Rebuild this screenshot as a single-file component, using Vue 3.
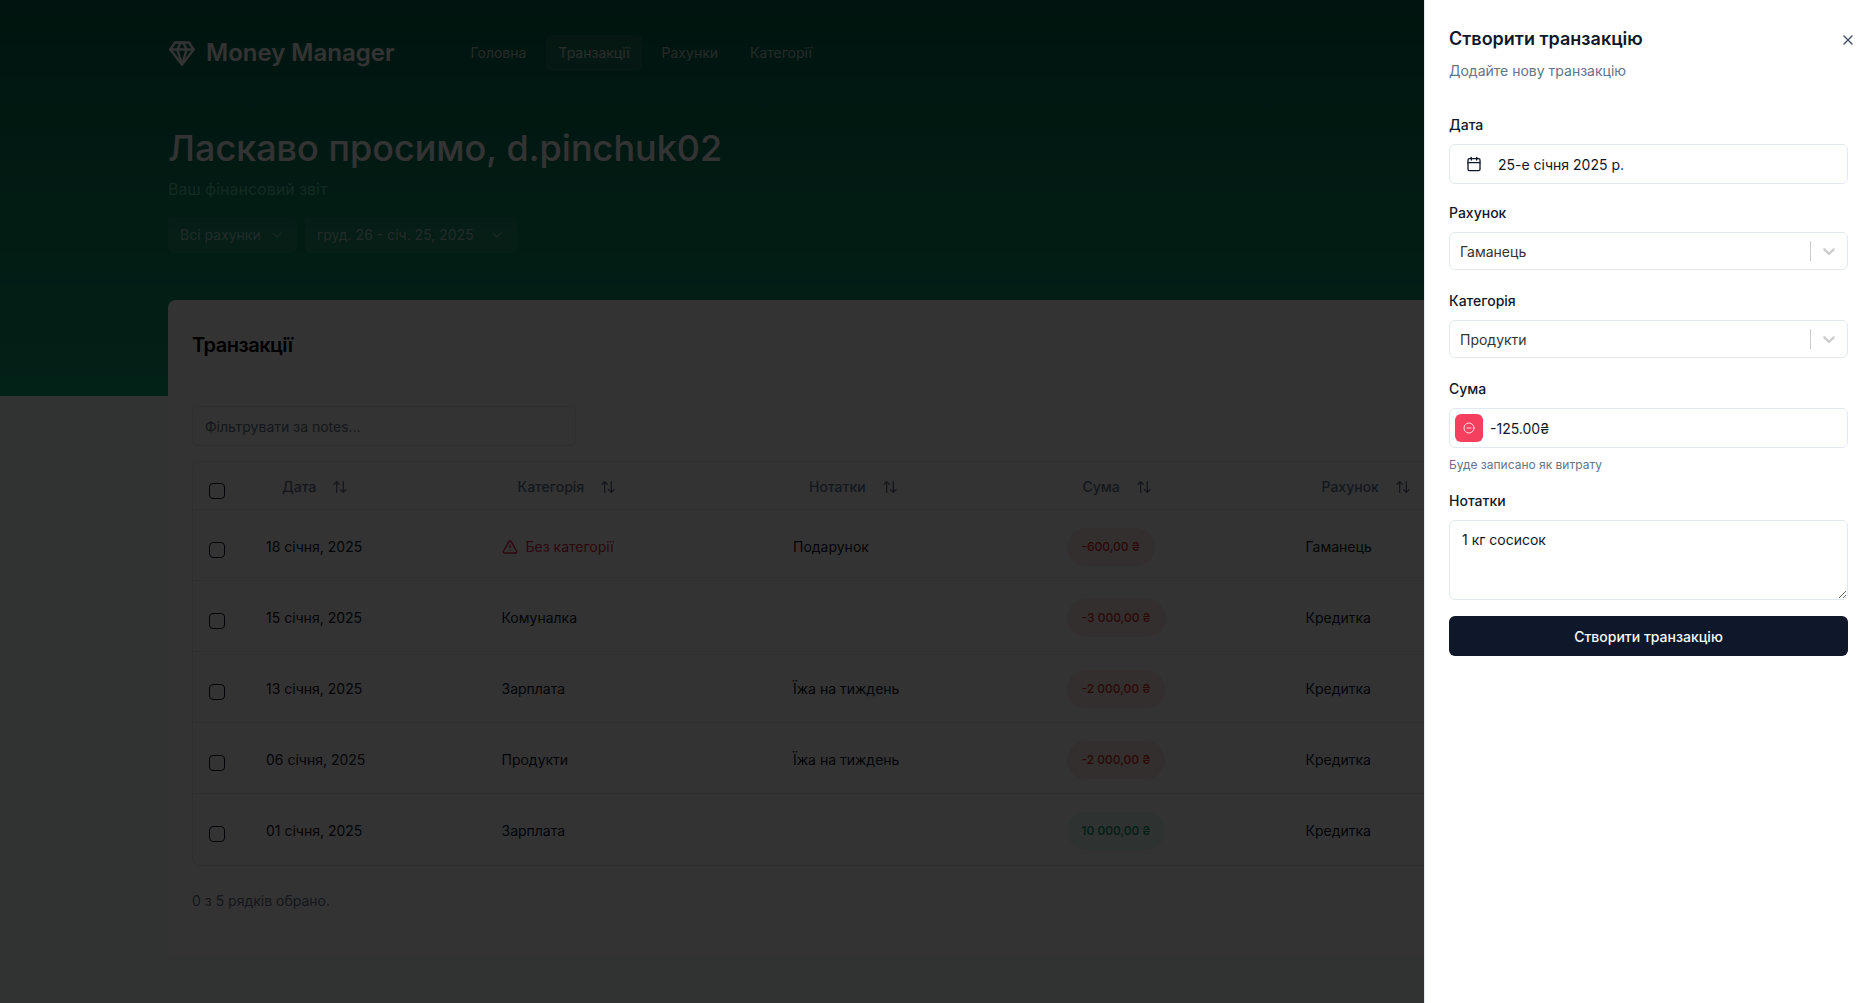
<template>
  <div class="page">
    <header class="hero">
      <div class="wrap">
        <nav class="topbar">
          <div class="brand">
            <svg class="gem" viewBox="0 0 24 24"><path d="M6 3h12l4 6-10 13L2 9Z" /><path d="M11 3 8 9l4 13 4-13-3-6" /><path d="M2 9h20" /></svg>
            <span>Money Manager</span>
          </div>
          <div class="links">
            <a v-for="link in links" :key="link" class="link" :class="{ active: link === 'Транзакції' }">{{ link }}</a>
          </div>
        </nav>
        <h1>Ласкаво просимо, d.pinchuk02</h1>
        <p class="sub">Ваш фінансовий звіт</p>
        <div class="filters">
          <button class="filter acc">
            <span>Всі рахунки</span>
            <svg class="ico chev" viewBox="0 0 24 24"><path d="m6 9 6 6 6-6" /></svg>
          </button>
          <button class="filter range">
            <span>груд. 26 - січ. 25, 2025</span>
            <svg class="ico chev" viewBox="0 0 24 24"><path d="m6 9 6 6 6-6" /></svg>
          </button>
        </div>
      </div>
    </header>

    <main class="wrap card">
      <h2>Транзакції</h2>
      <input class="search" type="text" placeholder="Фільтрувати за notes..." />
      <div class="table-box">
        <table>
          <colgroup>
            <col style="width: 57px" />
            <col style="width: 235.5px" />
            <col style="width: 291.5px" />
            <col style="width: 273.5px" />
            <col style="width: 239px" />
            <col />
          </colgroup>
          <thead>
            <tr>
              <th><span class="check"></span></th>
              <th v-for="col in columns" :key="col">
                <span class="sort">{{ col }}
                  <svg class="ico" viewBox="0 0 24 24"><path d="m21 16-4 4-4-4" /><path d="M17 20V4" /><path d="m3 8 4-4 4 4" /><path d="M7 4v16" /></svg>
                </span>
              </th>
              <th></th>
            </tr>
          </thead>
          <tbody>
            <tr v-for="row in rows" :key="row.date">
              <td><span class="check"></span></td>
              <td>{{ row.date }}</td>
              <td>
                <span v-if="!row.category" class="no-cat">
                  <svg class="ico" viewBox="0 0 24 24"><path d="m21.73 18-8-14a2 2 0 0 0-3.48 0l-8 14A2 2 0 0 0 4 21h16a2 2 0 0 0 1.73-3" /><path d="M12 9v4" /><path d="M12 17h.01" /></svg>
                  Без категорії
                </span>
                <template v-else>{{ row.category }}</template>
              </td>
              <td>{{ row.notes }}</td>
              <td><span class="pill" :class="row.income ? 'plus' : 'minus'">{{ row.amount }}</span></td>
              <td>{{ row.account }}</td>
              <td></td>
            </tr>
          </tbody>
        </table>
      </div>
      <p class="selected">0 з 5 рядків обрано.</p>
    </main>

    <div class="overlay"></div>

    <aside class="sheet">
      <svg class="ico close" viewBox="0 0 24 24"><path d="M18 6 6 18" /><path d="m6 6 12 12" /></svg>
      <h3>Створити транзакцію</h3>
      <p class="desc">Додайте нову транзакцію</p>

      <form class="form" @submit.prevent>
        <label>Дата</label>
        <button type="button" class="date">
          <svg class="ico" viewBox="0 0 24 24"><path d="M8 2v4" /><path d="M16 2v4" /><rect x="3" y="4" width="18" height="18" rx="2" /><path d="M3 10h18" /></svg>
          <span>25-е січня 2025 р.</span>
        </button>

        <label>Рахунок</label>
        <div class="select">
          <span>Гаманець</span>
          <i class="divider"></i>
          <svg class="select-arrow" viewBox="0 0 20 20"><path d="M4.516 7.548c0.436-0.446 1.043-0.481 1.576 0l3.908 3.747 3.908-3.747c0.533-0.481 1.141-0.446 1.574 0 0.436 0.445 0.408 1.197 0 1.615-0.406 0.418-4.695 4.502-4.695 4.502-0.217 0.223-0.502 0.335-0.787 0.335s-0.57-0.112-0.789-0.335c0 0-4.287-4.084-4.695-4.502s-0.436-1.17 0-1.615z" /></svg>
        </div>

        <label>Категорія</label>
        <div class="select">
          <span>Продукти</span>
          <i class="divider"></i>
          <svg class="select-arrow" viewBox="0 0 20 20"><path d="M4.516 7.548c0.436-0.446 1.043-0.481 1.576 0l3.908 3.747 3.908-3.747c0.533-0.481 1.141-0.446 1.574 0 0.436 0.445 0.408 1.197 0 1.615-0.406 0.418-4.695 4.502-4.695 4.502-0.217 0.223-0.502 0.335-0.787 0.335s-0.57-0.112-0.789-0.335c0 0-4.287-4.084-4.695-4.502s-0.436-1.17 0-1.615z" /></svg>
        </div>

        <label>Сума</label>
        <div class="amount">
          <span class="sign">
            <svg viewBox="0 0 24 24"><circle cx="12" cy="12" r="10" /><path d="M8 12h8" /></svg>
          </span>
          <span class="value">-125.00₴</span>
        </div>
        <p class="hint">Буде записано як витрату</p>

        <label>Нотатки</label>
        <textarea class="notes">1 кг сосисок</textarea>

        <button type="button" class="submit">Створити транзакцію</button>
      </form>
    </aside>
  </div>
</template>

<script setup>
const links = ['Головна', 'Транзакції', 'Рахунки', 'Категорії'];
const columns = ['Дата', 'Категорія', 'Нотатки', 'Сума', 'Рахунок'];

const rows = [
  { date: '18 січня, 2025', category: '', notes: 'Подарунок', amount: '-600,00 ₴', account: 'Гаманець' },
  { date: '15 січня, 2025', category: 'Комуналка', notes: '', amount: '-3 000,00 ₴', account: 'Кредитка' },
  { date: '13 січня, 2025', category: 'Зарплата', notes: 'Їжа на тиждень', amount: '-2 000,00 ₴', account: 'Кредитка' },
  { date: '06 січня, 2025', category: 'Продукти', notes: 'Їжа на тиждень', amount: '-2 000,00 ₴', account: 'Кредитка' },
  { date: '01 січня, 2025', category: 'Зарплата', notes: '', amount: '10 000,00 ₴', account: 'Кредитка', income: true },
];
</script>

<style>
html,
body {
  margin: 0;
  height: 100%;
  overflow: hidden;
  background: #f6faf8;
}
</style>

<style scoped>
.page {
  height: 1003px;
  font-family: Inter, "Liberation Sans", sans-serif;
  font-size: 14px;
  line-height: 20px;
  color: #0f172a;
  background: #f6faf8;
}

.wrap {
  width: 1536px;
  margin: 0 auto;
  box-sizing: border-box;
}

.hero {
  height: 396px;
  background: linear-gradient(to bottom, #07654b, #0da674);
  color: #fff;
}

.topbar {
  display: flex;
  align-items: center;
  padding-top: 35px;
}

.brand {
  display: flex;
  align-items: center;
  gap: 10px;
  font-size: 24px;
  font-weight: 600;
  line-height: 36px;
  width: 290.5px;
}

.gem {
  width: 28px;
  height: 28px;
  fill: none;
  stroke: currentColor;
  stroke-width: 2;
  stroke-linecap: round;
  stroke-linejoin: round;
}

.links {
  display: flex;
  gap: 8px;
}

.link {
  padding: 8px 12px;
  border-radius: 6px;
  color: rgba(255, 255, 255, 0.7);
}

.link.active {
  background: rgba(255, 255, 255, 0.08);
  color: rgba(255, 255, 255, 0.75);
}

h1 {
  margin: 57px 0 0;
  font-size: 36px;
  line-height: 40px;
  font-weight: 500;
}

.sub {
  margin: 9px 0 0;
  font-size: 16px;
  line-height: 24px;
  color: #5fcfa8;
}

.filters {
  display: flex;
  gap: 8px;
  margin-top: 16px;
}

.filter {
  display: flex;
  align-items: center;
  justify-content: space-between;
  height: 36px;
  padding: 0 12px;
  border: 0;
  border-radius: 6px;
  background: rgba(255, 255, 255, 0.08);
  color: rgba(255, 255, 255, 0.62);
  font: inherit;
}

.filter.acc {
  width: 129px;
}

.filter.range {
  width: 212px;
}

.ico {
  width: 16px;
  height: 16px;
  flex: none;
  fill: none;
  stroke: currentColor;
  stroke-width: 2;
  stroke-linecap: round;
  stroke-linejoin: round;
}

.chev {
  opacity: 0.6;
}

.card {
  position: relative;
  margin-top: -96px;
  height: 658px;
  padding: 31px 24px 0;
  background: #fff;
  border-radius: 8px;
}

h2 {
  margin: 0;
  font-size: 20px;
  line-height: 28px;
  font-weight: 600;
  letter-spacing: -0.5px;
  color: #000;
}

.search {
  display: block;
  width: 384px;
  height: 40px;
  margin-top: 47px;
  padding: 0 12px;
  box-sizing: border-box;
  border: 1px solid #e2e8f0;
  border-radius: 6px;
  background: #fff;
  font: inherit;
  outline: none;
}

.search::placeholder {
  color: #64748b;
}

.table-box {
  margin-top: 15px;
  border: 1px solid #e2e8f0;
  border-radius: 8px;
  overflow: hidden;
}

table {
  width: 100%;
  border-collapse: separate;
  border-spacing: 0;
  table-layout: fixed;
}

th {
  height: 48px;
  padding: 2px 16px 0;
  box-sizing: border-box;
  text-align: left;
  font-weight: 500;
  color: #64748b;
  border-bottom: 1px solid #e2e8f0;
}

td {
  height: 71px;
  padding: 3px 16px 0;
  box-sizing: border-box;
  border-bottom: 1px solid #e2e8f0;
}

tbody tr:last-child td {
  border-bottom: 0;
}

.check {
  display: block;
  width: 16px;
  height: 16px;
  margin-top: 6px;
  box-sizing: border-box;
  border: 1px solid #0f172a;
  border-radius: 4px;
}

th .check {
  margin-top: 8px;
}

.sort {
  display: inline-flex;
  align-items: center;
  gap: 16px;
  padding-left: 16px;
}

.no-cat {
  display: inline-flex;
  align-items: center;
  gap: 8px;
  vertical-align: middle;
  color: #e11d48;
}

.pill {
  display: inline-block;
  padding: 12px 15px;
  border-radius: 999px;
  font-size: 12px;
  line-height: 14px;
  font-weight: 500;
}

.pill.minus {
  background: #fce8e8;
  color: #dc2626;
}

.pill.plus {
  background: #e3f7ef;
  color: #059669;
}

.selected {
  margin: 25px 0 0;
  color: #64748b;
}

.overlay {
  position: fixed;
  inset: 0;
  background: rgba(0, 0, 0, 0.8);
}

.sheet {
  position: fixed;
  top: 0;
  right: 0;
  bottom: 0;
  width: 448px;
  box-sizing: border-box;
  padding: 25px 24px 24px 24px;
  background: #fff;
  border-left: 1px solid #e2e8f0;
}

.close {
  position: absolute;
  top: 32px;
  right: 16px;
  color: #475569;
}

h3 {
  margin: 0;
  font-size: 18px;
  line-height: 28px;
  font-weight: 600;
}

.desc {
  margin: 8px 0 0;
  color: #64748b;
}

.form {
  display: flex;
  flex-direction: column;
  margin-top: 15px;
}

.form label {
  display: block;
  margin: 19px 0 9px;
  font-weight: 500;
}

.date {
  display: flex;
  align-items: center;
  gap: 16px;
  height: 40px;
  padding: 0 16px;
  border: 1px solid #e2e8f0;
  border-radius: 6px;
  background: #fff;
  color: #0f172a;
  font: inherit;
  text-align: left;
}

.date span {
  padding-top: 2px;
}

.select {
  display: flex;
  align-items: center;
  height: 38px;
  margin-bottom: 2px;
  padding: 0 8px 0 10px;
  box-sizing: border-box;
  border: 1px solid #e2e8f0;
  border-radius: 6px;
  color: #333;
}

.select span {
  flex: 1;
  padding-top: 2px;
}

.divider {
  width: 1px;
  height: 20px;
  background: #ccc;
}

.select-arrow {
  width: 20px;
  height: 20px;
  margin-left: 8px;
  fill: #ccc;
}

.amount {
  display: flex;
  align-items: center;
  gap: 7px;
  height: 40px;
  padding: 0 5px;
  box-sizing: border-box;
  border: 1px solid #e2e8f0;
  border-radius: 6px;
}

.value {
  padding-top: 2px;
}

.sign {
  display: flex;
  align-items: center;
  justify-content: center;
  width: 28px;
  height: 28px;
  border-radius: 6px;
  background: #f43f5e;
}

.sign svg {
  width: 12px;
  height: 12px;
  fill: none;
  stroke: #ffe4e6;
  stroke-width: 2;
  stroke-linecap: round;
}

.hint {
  margin: 9px 0 -1px;
  font-size: 12px;
  line-height: 16px;
  color: #64748b;
}

.notes {
  display: block;
  height: 80px;
  padding: 9px 12px 8px;
  box-sizing: border-box;
  border: 1px solid #e2e8f0;
  border-radius: 6px;
  color: #0f172a;
  font: inherit;
  outline: none;
}

.submit {
  height: 40px;
  margin-top: 16px;
  padding: 2px 0 0;
  border: 0;
  border-radius: 6px;
  background: #0f172a;
  color: #f8fafc;
  font: inherit;
  font-weight: 500;
}
</style>
